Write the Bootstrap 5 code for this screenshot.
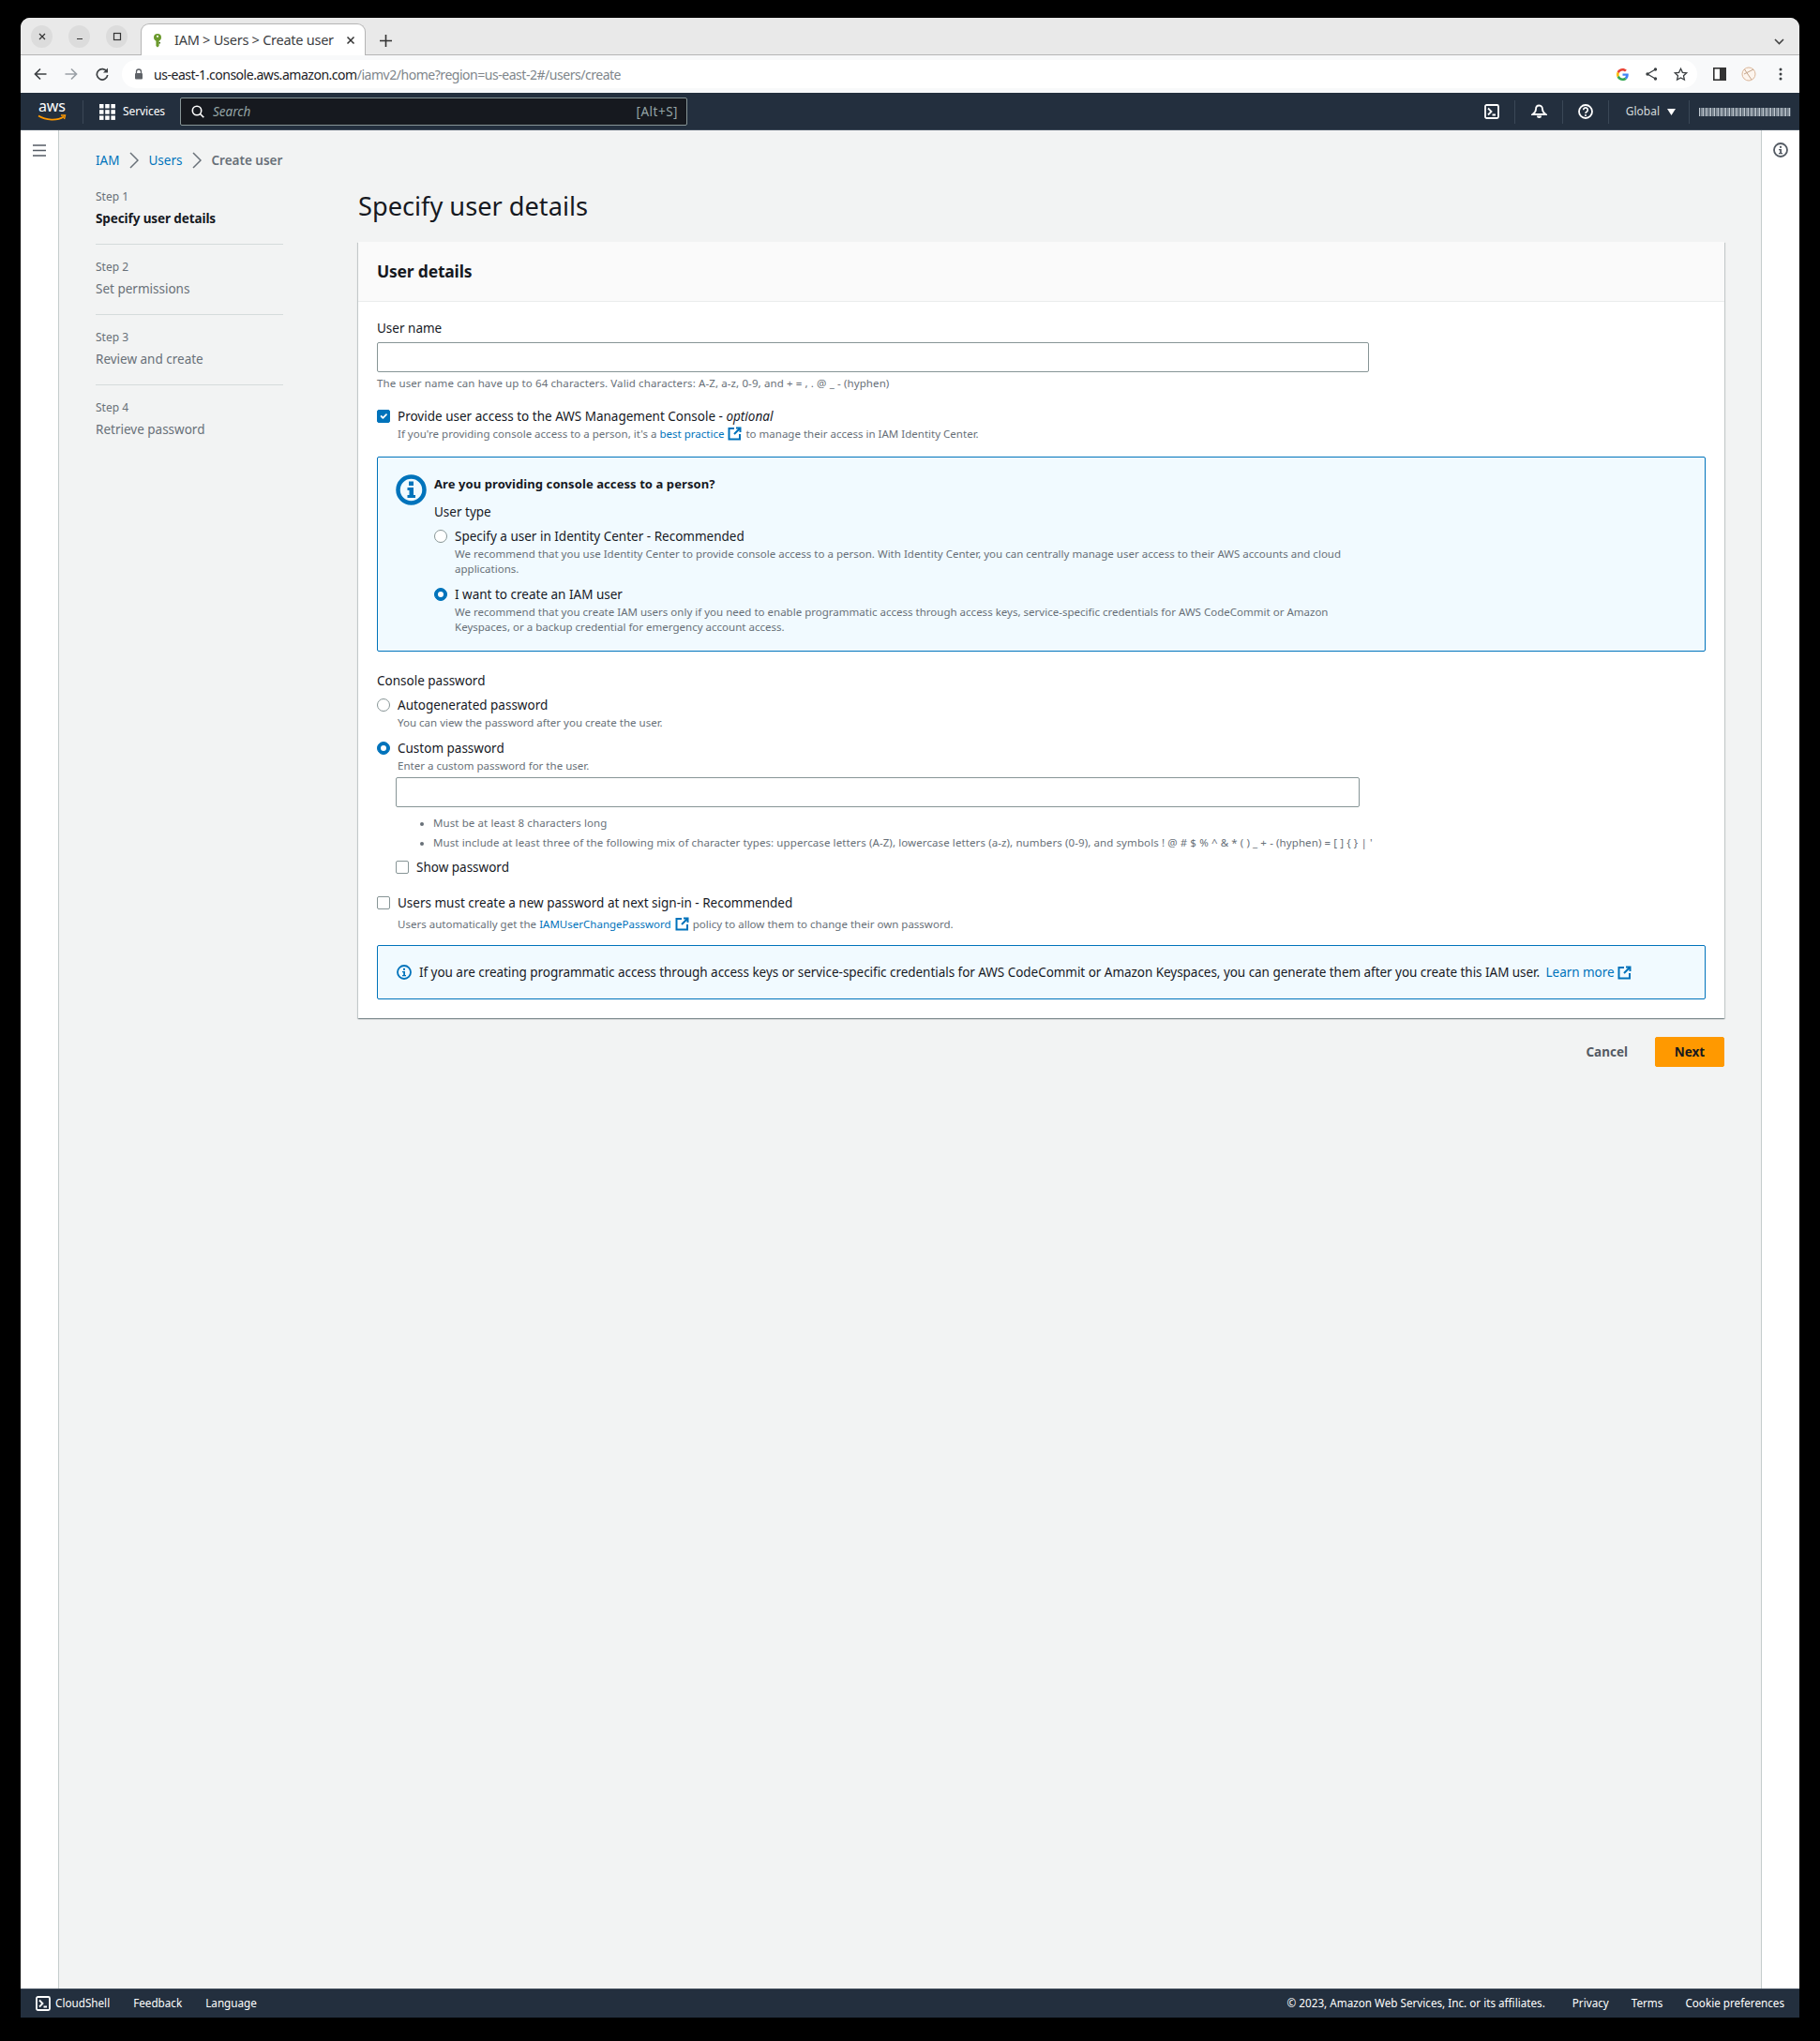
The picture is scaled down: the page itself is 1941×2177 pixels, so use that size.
<!DOCTYPE html>
<html lang="en">
<head>
<meta charset="utf-8">
<title>IAM > Users > Create user</title>
<link href="https://cdn.jsdelivr.net/npm/bootstrap@5.3.0/dist/css/bootstrap.min.css" rel="stylesheet">
<style>
html,body{height:100%;}
body{background:#000;font-family:"Noto Sans","Open Sans","Liberation Sans",sans-serif;font-size:13.5px;color:#16191f;}
a{text-decoration:none;color:#0073bb;}
.win{margin:19px 0 0 22px;width:1897px;height:2133px;display:flex;flex-direction:column;overflow:hidden;border-radius:10px 10px 0 0;background:#fff;}
.tabstrip{height:40px;background:#e9e9e9;position:relative;display:flex;align-items:flex-end;border-bottom:1px solid #b5b5b5;flex:none;}
.wbtns{display:flex;gap:17px;padding:0 0 7px 11px;}
.wbtn{width:23px;height:24px;border-radius:50%;background:#dcdcdc;display:flex;align-items:center;justify-content:center;}
.ctab{margin-left:14px;width:240px;height:34px;background:#fff;border:1px solid #b5b5b5;border-bottom:0;border-radius:9px 9px 0 0;margin-bottom:-1px;display:flex;align-items:center;padding-left:12px;font-size:14.5px;color:#3c4043;letter-spacing:-.25px;}
.ctab-t{margin-left:13px;flex:1;white-space:nowrap;}
.ctab-x{margin-right:10px;display:flex;}
.plus{margin:0 0 8px 15px;display:flex;}
.strip-end{margin:0 16px 10px auto;display:flex;}
.toolbar{height:40px;background:#f8f9fa;display:flex;align-items:center;flex:none;}
.tb-nav{display:flex;gap:19px;padding-left:14px;width:108px;align-items:center;flex:none;}
.omni{width:1680px;height:30px;border-radius:15px;background:#fff;display:flex;align-items:center;padding-left:13px;flex:none;font-size:14px;letter-spacing:-.47px;color:#80868b;}
.omni svg.lk{margin-right:11px;}
.omni b{font-weight:400;color:#202124;}
.omni-end{margin-left:auto;display:flex;align-items:center;gap:17px;padding-right:10px;}
.tb-end{display:flex;align-items:center;gap:16px;padding-left:17px;}
.awsnav{height:40px;background:#232f3e;display:flex;align-items:center;color:#fff;flex:none;border-bottom:1px solid #414d5c;padding:1px 0 0;font-size:12px;}
.logo{margin-left:18px;width:32px;flex:none;display:flex;}
.vsep{width:1px;height:25px;background:#3a4756;flex:none;}
.svc{display:flex;align-items:center;gap:8px;margin-left:17px;letter-spacing:-.1px;}
.srch{margin-left:16px;width:541px;height:30px;background:#16191f;border:1px solid #879596;border-radius:2px;display:flex;align-items:center;padding:0 9px 0 11px;color:#95a5a6;font-size:13.5px;}
.srch i{margin-left:9px;}
.srch span{margin-left:auto;letter-spacing:.5px;}
.nav-end{margin-left:auto;display:flex;align-items:center;}
.navic-a{margin-left:2px;}
.navic-b{margin:0 16px 0 17px;}
.glob{color:#d5dbdb;margin-left:18px;}
.caret-g{margin-right:14px;}
.blur{width:98px;height:9px;margin:0 9px 0 10px;background:repeating-linear-gradient(90deg,#c2cad2 0 1px,#4d5967 1px 2px,#7d8994 2px 4px);filter:blur(.6px);}
.mid{flex:1;display:flex;min-height:0;}
.sidel{width:41px;background:#fff;border-right:1px solid #c5cccc;flex:none;padding:10px 0 0 13px;}
.sider{width:41px;background:#fff;border-left:1px solid #c5cccc;flex:none;padding:10px 0 0 12px;}
.mainc{flex:1;background:#f2f3f3;padding:22px 39px 0 39px;min-width:0;}
.crumb{display:flex;align-items:center;height:20px;margin-bottom:21px;font-size:13.5px;}
.crumb svg{margin:0 10px 0 11px;}
.crumb .here{color:#687078;font-weight:600;}
.twocol{display:flex;gap:80px;}
.steps{width:200px;flex:none;}
.stepi{height:75px;}
.step-no{font-size:12px;line-height:16px;color:#687078;}
.step-nm{font-size:13.5px;line-height:20px;margin-top:5px;color:#687078;}
.step-nm.on{font-weight:700;color:#16191f;letter-spacing:-.1px;}
.step-rule{border-top:1px solid #d5dbdb;margin-top:17px;}
.formcol{flex:1;min-width:0;}
.ttl{font-size:27.2px;line-height:36px;margin:0 0 20px;font-weight:400;}
.panel{border:0;border-radius:0;box-shadow:0 1px 1px 0 rgba(0,28,36,.3),1px 1px 1px 0 rgba(0,28,36,.15),-1px 1px 1px 0 rgba(0,28,36,.15);}
.panel .card-header{height:64px;background:#fafafa;border-bottom:1px solid #eaeded;border-radius:0;padding:0 20px;display:flex;align-items:center;}
.panel .card-header h2{font-size:17.5px;font-weight:700;margin:0;letter-spacing:-.2px;}
.panel .card-body{padding:18px 20px 20px;}
.l20{line-height:20px;}
.hint{font-size:11.5px;line-height:16px;color:#687078;letter-spacing:.11px;}
.fld{height:32px;border:1px solid #879596;border-radius:2px;padding:0 10px;box-shadow:none;}
.w-a{width:1058px;margin:5px 0 4px;}
.w-b{width:1028px;margin:4px 0 0;}
.opt{display:flex;align-items:flex-start;padding:0;margin:0;min-height:0;}
.opt .form-check-input{width:14px;height:14px;margin:3px 8px 0 0;float:none;flex:none;border:1px solid #879596;}
.opt .form-check-input[type=checkbox]{border-radius:2px;}
.form-check-input:checked{background-color:#0073bb;border-color:#0073bb;}
.opt .form-check-label{line-height:20px;}
.ind{padding-left:22px;letter-spacing:.01px;}
.gt-17{margin-top:17px;}
.gt-1{margin-top:1px;}
.gt-10{margin-top:10px;}
.gt-6{margin-top:6px;}
.gt-9{margin-top:9px;}
.gt-21{margin-top:21px;}
.gt-8{margin-top:8px;}
.gt-18{margin-top:18px;}
.gt-5{margin-top:5px;}
.bluebox{background:#f1faff;border:1px solid #0073bb;border-radius:2px;}
.box-a{margin-top:16px;height:208px;padding:18px 20px 0 19px;display:flex;gap:8px;}
.box-ic{flex:none;width:33px;display:flex;height:33px;}
.box-w{width:1000px;}
.box-h{font-weight:700;line-height:20px;letter-spacing:.08px;font-size:13px;}
.rules{margin:9px 0 0;padding:0 0 0 40px;font-size:11.5px;line-height:16px;color:#687078;white-space:nowrap;letter-spacing:.1px;}
.rules li+li{margin-top:5px;}
.rules li::marker{font-size:10px;}
.subind{margin-left:20px;}
.box-b{margin-top:14px;height:58px;padding:0 20px;display:flex;align-items:center;gap:8px;font-size:13.5px;letter-spacing:-.04px;}
.box-b a{margin-left:3px;}
.ext{vertical-align:-3px;margin:0 1px 0 4px;}
.ext-w{margin-left:3px;}
.actions{display:flex;justify-content:flex-end;align-items:center;margin-top:20px;}
.btn-c{color:#545b64;font-weight:700;padding:0;font-size:13.5px;border:0;margin-right:29px;}
.btn-n{background:#f90;border:1px solid #f90;border-radius:2px;color:#16191f;font-weight:700;width:74px;height:32px;padding:0;font-size:13.5px;}
.btn-n:hover{background:#ec7211;}
.foot{height:31px;background:#232f3e;border-top:1px solid #414d5c;color:#fff;display:flex;align-items:center;font-size:11.7px;padding:0 16px;flex:none;}
.foot a{color:#fff;}
.foot-l{display:flex;align-items:center;}
.foot-l svg{margin-right:5px;}
.foot-l a+a{margin-left:25px;}
.foot-r{margin-left:auto;display:flex;align-items:center;}
.foot-r a{margin-left:24px;}
.foot-r a:first-of-type{margin-left:29px;}
</style>
</head>
<body>
<div class="win">
  <div class="tabstrip">
    <div class="wbtns">
      <div class="wbtn"><svg width="10" height="10" viewBox="0 0 10 10"><path d="M2 2l6 6M8 2l-6 6" stroke="#333" stroke-width="1.2"/></svg></div>
      <div class="wbtn"><svg width="10" height="10" viewBox="0 0 10 10"><path d="M2 7.5h6" stroke="#333" stroke-width="1.2"/></svg></div>
      <div class="wbtn"><svg width="10" height="10" viewBox="0 0 10 10"><rect x="1.5" y="1.5" width="7" height="7" fill="none" stroke="#333" stroke-width="1.2"/></svg></div>
    </div>
    <div class="ctab">
      <svg width="10" height="16" viewBox="0 0 10 16" class="flex-none"><path d="M5 1a4 4 0 0 1 4 4c0 1.7-1 3-2.4 3.7V14L5 15.500 3.400 14V8.700C2 8 1 6.700 1 5a4 4 0 0 1 4-4z" fill="#6b9a2c"/><circle cx="5" cy="3.800" r="1.100" fill="#fff"/><path d="M6.500 10h1.500v1.500H6.500z" fill="#3f6a14"/></svg>
      <span class="ctab-t">IAM &gt; Users &gt; Create user</span>
      <span class="ctab-x"><svg width="10" height="10" viewBox="0 0 10 10"><path d="M1.500 1.500l7 7M8.500 1.500l-7 7" stroke="#333" stroke-width="1.500"/></svg></span>
    </div>
    <div class="plus"><svg width="13" height="13" viewBox="0 0 13 13"><path d="M6.500 0v13M0 6.500h13" stroke="#333" stroke-width="1.600"/></svg></div>
    <div class="strip-end"><svg width="11" height="7" viewBox="0 0 11 7"><path d="M1 1l4.500 4.500L10 1" fill="none" stroke="#444" stroke-width="1.600"/></svg></div>
  </div>
  <div class="toolbar">
    <div class="tb-nav">
      <svg width="14" height="14" viewBox="0 0 14 14"><path d="M13.500 7H2M7 1.500L1.500 7 7 12.500" fill="none" stroke="#3c4043" stroke-width="1.700"/></svg>
      <svg width="14" height="14" viewBox="0 0 14 14"><path d="M.5 7H12M7 1.500L12.500 7 7 12.500" fill="none" stroke="#9aa0a6" stroke-width="1.700"/></svg>
      <svg width="14" height="14" viewBox="0 0 14 14"><path d="M12 4.500A5.700 5.700 0 1 0 12.700 8" fill="none" stroke="#3c4043" stroke-width="1.700"/><path d="M13 .5v5H8z" fill="#3c4043"/></svg>
    </div>
    <div class="omni">
      <svg class="lk" width="10" height="12" viewBox="0 0 10 12"><path d="M2.500 5V3.500a2.500 2.500 0 0 1 5 0V5" fill="none" stroke="#5f6368" stroke-width="1.300"/><rect x="1" y="5" width="8" height="6.500" rx="1" fill="#5f6368"/></svg>
      <span><b>us-east-1.console.aws.amazon.com</b>/iamv2/home?region=us-east-2#/users/create</span>
      <div class="omni-end">
        <svg width="13" height="13" viewBox="0 0 48 48"><path fill="#ea4335" d="M24 9.500c3.500 0 6.700 1.200 9.200 3.600l6.900-6.900C35.900 2.400 30.500 0 24 0 14.600 0 6.500 5.400 2.600 13.200l8 6.200C12.500 13.700 17.800 9.500 24 9.500z"/><path fill="#4285f4" d="M47 24.500c0-1.600-.1-3.100-.4-4.500H24v9h12.900c-.6 3-2.200 5.500-4.700 7.200l7.700 6C44.400 38.100 47 31.900 47 24.500z"/><path fill="#fbbc05" d="M10.500 28.600c-.5-1.400-.8-3-.8-4.600s.3-3.200.8-4.600l-8-6.200C.9 16.500 0 20.100 0 24s.9 7.500 2.600 10.800l7.900-6.200z"/><path fill="#34a853" d="M24 48c6.500 0 11.900-2.100 15.900-5.800l-7.700-6c-2.200 1.500-4.900 2.300-8.200 2.300-6.200 0-11.500-4.200-13.400-9.900l-8 6.200C6.500 42.600 14.600 48 24 48z"/></svg>
        <svg width="14" height="14" viewBox="0 0 14 14"><path d="M11.500 2L3 7l8.500 5" fill="none" stroke="#3c4043" stroke-width="1.300"/><circle cx="11.500" cy="2" r="1.700" fill="#3c4043"/><circle cx="3" cy="7" r="1.700" fill="#3c4043"/><circle cx="11.500" cy="12" r="1.700" fill="#3c4043"/></svg>
        <svg width="15" height="15" viewBox="0 0 15 15"><path d="M7.500 1.300l1.900 4 4.300.5-3.200 3 .9 4.300-3.900-2.200-3.900 2.200.9-4.300-3.200-3 4.300-.5z" fill="none" stroke="#3c4043" stroke-width="1.300"/></svg>
      </div>
    </div>
    <div class="tb-end">
      <svg width="14" height="14" viewBox="0 0 14 14"><rect x=".8" y=".8" width="12.400" height="12.400" fill="#fff" stroke="#333" stroke-width="1.600"/><rect x="7" y="1" width="6" height="12" fill="#333"/></svg>
      <svg width="16" height="16" viewBox="0 0 16 16"><circle cx="8" cy="8" r="7.500" fill="#fdf5ee"/><circle cx="8" cy="8" r="7" fill="none" stroke="#d9b79c"/><path d="M3.500 3L11 14M3 8L13 3" stroke="#c4a58c" fill="none"/></svg>
      <svg width="4" height="14" viewBox="0 0 4 14" class="ms-2"><circle cx="2" cy="2" r="1.500" fill="#3c4043"/><circle cx="2" cy="7" r="1.500" fill="#3c4043"/><circle cx="2" cy="12" r="1.500" fill="#3c4043"/></svg>
    </div>
  </div>
  <nav class="awsnav">
    <div class="logo"><svg width="32" height="37" viewBox="0 -5 32 37"><text x="1" y="13" fill="#fff" font-family="Noto Sans,sans-serif" font-size="16" textLength="29">aws</text><path d="M1 17.500c8 5 20 5.500 27 1" fill="none" stroke="#f90" stroke-width="1.700"/><path d="M25 17h4.500l-1 4" fill="none" stroke="#f90" stroke-width="1.400"/></svg></div>
    <div class="vsep ms-3"></div>
    <div class="svc"><svg width="17" height="17" viewBox="0 0 17 17" fill="#fff"><rect width="4.500" height="4.500"/><rect x="6.200" width="4.500" height="4.500"/><rect x="12.400" width="4.500" height="4.500"/><rect y="6.200" width="4.500" height="4.500"/><rect x="6.200" y="6.200" width="4.500" height="4.500"/><rect x="12.400" y="6.200" width="4.500" height="4.500"/><rect y="12.400" width="4.500" height="4.500"/><rect x="6.200" y="12.400" width="4.500" height="4.500"/><rect x="12.400" y="12.400" width="4.500" height="4.500"/></svg><span>Services</span></div>
    <div class="srch">
      <svg width="14" height="14" viewBox="0 0 14 14"><circle cx="6" cy="6" r="4.700" fill="none" stroke="#fff" stroke-width="1.600"/><path d="M9.500 9.500l3.800 3.800" stroke="#fff" stroke-width="1.600"/></svg>
      <i>Search</i><span>[Alt+S]</span>
    </div>
    <div class="nav-end">
      <svg width="16" height="16" viewBox="0 0 16 16"><rect x="1" y="1" width="14" height="14" rx="1.500" fill="none" stroke="#fff" stroke-width="1.800"/><path d="M4 4.500L7.500 8 4 11.500M8.500 11.500h3.500" fill="none" stroke="#fff" stroke-width="1.800"/></svg>
      <div class="vsep ms-3"></div>
      <svg width="17" height="16" viewBox="0 0 17 16" class="navic-b"><path d="M8.500 1.500c-2.500 0-3.500 2-3.500 4 0 2.500-1.500 4-3.500 5.500h14c-2-1.500-3.500-3-3.500-5.500 0-2-1-4-3.500-4z" fill="none" stroke="#fff" stroke-width="1.800"/><path d="M6 12.500a2.500 2.500 0 0 0 5 0z" fill="#fff"/></svg>
      <div class="vsep"></div>
      <svg width="16" height="16" viewBox="0 0 16 16" class="mx-3"><circle cx="8" cy="8" r="7" fill="none" stroke="#fff" stroke-width="1.800"/><path d="M5.700 6.200a2.300 2.300 0 1 1 3.500 2c-.8.500-1.200.9-1.200 1.800" fill="none" stroke="#fff" stroke-width="1.600"/><circle cx="8" cy="12" r="1" fill="#fff"/></svg>
      <div class="vsep"></div>
      <span class="glob">Global</span>
      <svg class="ms-2 caret-g" width="9" height="7" viewBox="0 0 9 7"><path d="M0 0h9L4.500 7z" fill="#fff"/></svg>
      <div class="vsep"></div>
      <div class="blur"></div>
    </div>
  </nav>
  <div class="mid">
    <aside class="sidel"><svg width="14" height="13" viewBox="0 0 14 13"><path d="M0 1h14M0 6.500h14M0 12h14" stroke="#545b64" stroke-width="1.700"/></svg></aside>
    <main class="mainc">
      <div class="crumb"><a href="#">IAM</a><svg width="10" height="18" viewBox="0 0 10 18"><path d="M1 1l8 8-8 8" fill="none" stroke="#687078" stroke-width="1.500"/></svg><a href="#">Users</a><svg width="10" height="18" viewBox="0 0 10 18"><path d="M1 1l8 8-8 8" fill="none" stroke="#687078" stroke-width="1.500"/></svg><span class="here">Create user</span></div>
      <div class="twocol">
        <div class="steps">
          <div class="stepi"><div class="step-no">Step 1</div><div class="step-nm on">Specify user details</div><div class="step-rule"></div></div>
          <div class="stepi"><div class="step-no">Step 2</div><div class="step-nm">Set permissions</div><div class="step-rule"></div></div>
          <div class="stepi"><div class="step-no">Step 3</div><div class="step-nm">Review and create</div><div class="step-rule"></div></div>
          <div class="stepi"><div class="step-no">Step 4</div><div class="step-nm">Retrieve password</div></div>
        </div>
        <div class="formcol">
          <h1 class="ttl">Specify user details</h1>
          <div class="card panel">
            <div class="card-header"><h2>User details</h2></div>
            <div class="card-body">
              <label class="l20 d-block" for="un">User name</label>
              <input id="un" class="form-control fld w-a" type="text">
              <div class="hint">The user name can have up to 64 characters. Valid characters: A-Z, a-z, 0-9, and + = , . @ _ - (hyphen)</div>

              <div class="form-check opt gt-17"><input class="form-check-input" type="checkbox" id="c1" checked><label class="form-check-label" for="c1">Provide user access to the AWS Management Console - <i>optional</i></label></div>
              <div class="hint ind gt-1">If you're providing console access to a person, it's a <a href="#">best practice<svg class="ext" width="15" height="15" viewBox="0 0 15 15"><path d="M7 2H1.500v11.500H13V8M9 1.500h4.500V6M13.500 1.500L7 8" fill="none" stroke="#0073bb" stroke-width="2"/></svg></a> to manage their access in IAM Identity Center.</div>

              <div class="bluebox box-a">
                <div class="box-ic"><svg width="33" height="33" viewBox="0 0 33 33"><circle cx="16.500" cy="16.500" r="14" fill="none" stroke="#0073bb" stroke-width="4.500"/><rect x="14" y="7.500" width="5" height="4.500" fill="#0073bb"/><path d="M12.500 14h6.500v8h2v3H12.500v-3h2v-5h-2z" fill="#0073bb"/></svg></div>
                <div class="box-w">
                  <div class="box-h">Are you providing console access to a person?</div>
                  <div class="l20 gt-10">User type</div>
                  <div class="form-check opt gt-6"><input class="form-check-input" type="radio" name="ut" id="r1"><label class="form-check-label" for="r1">Specify a user in Identity Center - Recommended</label></div>
                  <div class="hint ind gt-1">We recommend that you use Identity Center to provide console access to a person. With Identity Center, you can centrally manage user access to their AWS accounts and cloud applications.</div>
                  <div class="form-check opt gt-9"><input class="form-check-input" type="radio" name="ut" id="r2" checked><label class="form-check-label" for="r2">I want to create an IAM user</label></div>
                  <div class="hint ind gt-1">We recommend that you create IAM users only if you need to enable programmatic access through access keys, service-specific credentials for AWS CodeCommit or Amazon Keyspaces, or a backup credential for emergency account access.</div>
                </div>
              </div>

              <div class="l20 gt-21">Console password</div>
              <div class="form-check opt gt-6"><input class="form-check-input" type="radio" name="pw" id="p1"><label class="form-check-label" for="p1">Autogenerated password</label></div>
              <div class="hint ind gt-1">You can view the password after you create the user.</div>
              <div class="form-check opt gt-9"><input class="form-check-input" type="radio" name="pw" id="p2" checked><label class="form-check-label" for="p2">Custom password</label></div>
              <div class="hint ind gt-1">Enter a custom password for the user.</div>
              <div class="subind">
                <input class="form-control fld w-b" type="password" aria-label="Custom password">
                <ul class="rules">
                  <li>Must be at least 8 characters long</li>
                  <li>Must include at least three of the following mix of character types: uppercase letters (A-Z), lowercase letters (a-z), numbers (0-9), and symbols ! @ # $ % ^ &amp; * ( ) _ + - (hyphen) = [ ] { } | '</li>
                </ul>
                <div class="form-check opt gt-8"><input class="form-check-input" type="checkbox" id="c2"><label class="form-check-label" for="c2">Show password</label></div>
              </div>
              <div class="form-check opt gt-18"><input class="form-check-input" type="checkbox" id="c3"><label class="form-check-label" for="c3">Users must create a new password at next sign-in - Recommended</label></div>
              <div class="hint ind gt-5">Users automatically get the <a href="#">IAMUserChangePassword<svg class="ext" width="15" height="15" viewBox="0 0 15 15"><path d="M7 2H1.500v11.500H13V8M9 1.500h4.500V6M13.500 1.500L7 8" fill="none" stroke="#0073bb" stroke-width="2"/></svg></a> policy to allow them to change their own password.</div>

              <div class="bluebox box-b">
                <svg width="16" height="16" viewBox="0 0 16 16"><circle cx="8" cy="8" r="7" fill="none" stroke="#0073bb" stroke-width="1.800"/><rect x="7" y="3.800" width="2" height="2" fill="#0073bb"/><path d="M6 7h3v4h1v1.200H6V11h1.200V8.200H6z" fill="#0073bb"/></svg>
                <span>If you are creating programmatic access through access keys or service-specific credentials for AWS CodeCommit or Amazon Keyspaces, you can generate them after you create this IAM user. <a href="#">Learn more<svg class="ext ext-w" width="15" height="15" viewBox="0 0 15 15"><path d="M7 2H1.500v11.500H13V8M9 1.500h4.500V6M13.500 1.500L7 8" fill="none" stroke="#0073bb" stroke-width="2"/></svg></a></span>
              </div>
            </div>
          </div>
          <div class="actions"><button class="btn btn-c" type="button">Cancel</button><button class="btn btn-n" type="button">Next</button></div>
        </div>
      </div>
    </main>
    <aside class="sider"><svg width="16" height="16" viewBox="0 0 16 16"><circle cx="8" cy="8" r="7" fill="none" stroke="#545b64" stroke-width="1.800"/><rect x="7" y="3.800" width="2" height="2" fill="#545b64"/><path d="M6 7h3v4h1v1.200H6V11h1.200V8.200H6z" fill="#545b64"/></svg></aside>
  </div>
  <footer class="foot">
    <div class="foot-l">
      <svg width="16" height="16" viewBox="0 0 16 16"><rect x="1" y="1" width="14" height="14" rx="1.500" fill="none" stroke="#fff" stroke-width="1.800"/><path d="M4 4.500L7.500 8 4 11.500M8.500 11.500h3.500" fill="none" stroke="#fff" stroke-width="1.800"/></svg>
      <a href="#">CloudShell</a><a href="#">Feedback</a><a href="#">Language</a>
    </div>
    <div class="foot-r">
      <span>© 2023, Amazon Web Services, Inc. or its affiliates.</span><a href="#">Privacy</a><a href="#">Terms</a><a href="#">Cookie preferences</a>
    </div>
  </footer>
</div>
<script src="https://cdn.jsdelivr.net/npm/bootstrap@5.3.0/dist/js/bootstrap.bundle.min.js"></script>
</body>
</html>
